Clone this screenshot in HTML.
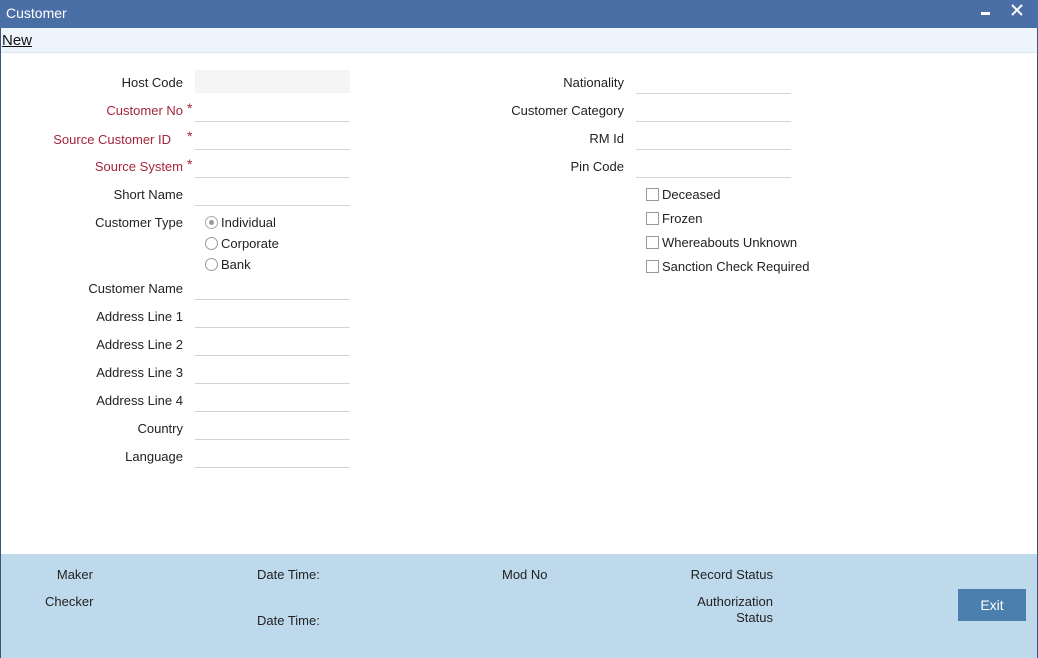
<!DOCTYPE html>
<html><head><meta charset="utf-8"><style>
*{margin:0;padding:0;box-sizing:border-box}
body{width:1038px;height:658px;overflow:hidden;background:#fff;font-family:"Liberation Sans",Arial,sans-serif;font-size:13px;color:#222;position:relative}
.a{position:absolute;white-space:nowrap}
.l{position:absolute;text-align:right;white-space:nowrap;line-height:16px}
.r{color:#a3263a}
.f{position:absolute;height:1px;background:#d4d4d4}
.n{font-family:"Liberation Sans Narrow","Liberation Sans",sans-serif;font-size:13px;color:#222;position:absolute;white-space:nowrap;line-height:16px}
.rad{position:absolute;width:13px;height:13px;border:1px solid #9a9a9a;border-radius:50%;background:#fff}
.cb{position:absolute;width:13px;height:13px;border:1px solid #9a9a9a;background:#fff}
</style></head><body>
<div class="a" style="left:0;top:0;width:1038px;height:28px;background:#4a6fa6"></div>
<div class="a" style="left:6px;top:5px;color:#fff;font-size:14px">Customer</div>
<div class="a" style="left:981px;top:12px;width:9px;height:3px;background:#fff"></div>
<svg class="a" style="left:1011px;top:4px" width="12" height="12" viewBox="0 0 12 12"><path d="M1 1L11 11M11 1L1 11" stroke="#fff" stroke-width="2"/></svg>
<div class="a" style="left:0;top:28px;width:1038px;height:25px;background:#eef4fc;border-bottom:1px solid #dde5ee"></div>
<div class="a" style="left:2px;top:32px;font-size:15px;text-decoration:underline;color:#111">New</div>
<div class="a" style="left:0;top:28px;width:1px;height:630px;background:#3a5578"></div>
<div class="a" style="left:1037px;top:28px;width:1px;height:630px;background:#3a5578"></div>

<div class="a" style="left:195px;top:70px;width:155px;height:23px;background:#f5f5f5"></div>
<div class="l" style="right:855px;top:75px">Host Code</div>
<div class="l r" style="right:855px;top:103px">Customer No</div><div class="a r" style="left:187px;top:100px;font-size:14px">*</div>
<div class="l r" style="right:867px;top:132px">Source Customer ID</div><div class="a r" style="left:187px;top:128px;font-size:14px">*</div>
<div class="l r" style="right:855px;top:159px">Source System</div><div class="a r" style="left:187px;top:156px;font-size:14px">*</div>
<div class="l" style="right:855px;top:187px">Short Name</div>
<div class="l" style="right:855px;top:215px">Customer Type</div>
<div class="f" style="left:195px;top:121px;width:155px"></div>
<div class="f" style="left:195px;top:149px;width:155px"></div>
<div class="f" style="left:195px;top:177px;width:155px"></div>
<div class="f" style="left:195px;top:205px;width:155px"></div>
<div class="rad" style="left:205px;top:216px;border-color:#aaa"></div><div class="a" style="left:209px;top:220px;width:5px;height:5px;border-radius:50%;background:#999"></div>
<div class="a" style="left:221px;top:215px">Individual</div>
<div class="rad" style="left:205px;top:237px"></div><div class="a" style="left:221px;top:236px">Corporate</div>
<div class="rad" style="left:205px;top:258px"></div><div class="a" style="left:221px;top:257px">Bank</div>

<div class="l" style="right:855px;top:281px">Customer Name</div>
<div class="l" style="right:855px;top:309px">Address Line 1</div>
<div class="l" style="right:855px;top:337px">Address Line 2</div>
<div class="l" style="right:855px;top:365px">Address Line 3</div>
<div class="l" style="right:855px;top:393px">Address Line 4</div>
<div class="l" style="right:855px;top:421px">Country</div>
<div class="l" style="right:855px;top:449px">Language</div>
<div class="f" style="left:195px;top:299px;width:155px"></div>
<div class="f" style="left:195px;top:327px;width:155px"></div>
<div class="f" style="left:195px;top:355px;width:155px"></div>
<div class="f" style="left:195px;top:383px;width:155px"></div>
<div class="f" style="left:195px;top:411px;width:155px"></div>
<div class="f" style="left:195px;top:439px;width:155px"></div>
<div class="f" style="left:195px;top:467px;width:155px"></div>

<div class="l" style="right:414px;top:75px">Nationality</div>
<div class="l" style="right:414px;top:103px">Customer Category</div>
<div class="l" style="right:414px;top:131px">RM Id</div>
<div class="l" style="right:414px;top:159px">Pin Code</div>
<div class="f" style="left:636px;top:93px;width:155px"></div>
<div class="f" style="left:636px;top:121px;width:155px"></div>
<div class="f" style="left:636px;top:149px;width:155px"></div>
<div class="f" style="left:636px;top:177px;width:155px"></div>
<div class="cb" style="left:646px;top:188px"></div><div class="a" style="left:662px;top:187px">Deceased</div>
<div class="cb" style="left:646px;top:212px"></div><div class="a" style="left:662px;top:211px">Frozen</div>
<div class="cb" style="left:646px;top:236px"></div><div class="a" style="left:662px;top:235px">Whereabouts Unknown</div>
<div class="cb" style="left:646px;top:260px"></div><div class="a" style="left:662px;top:259px">Sanction Check Required</div>

<div class="a" style="left:1px;top:554px;width:1036px;height:104px;background:#bfd9ec"></div>
<div class="n" style="right:945px;top:567px">Maker</div>
<div class="n" style="left:45px;top:594px">Checker</div>
<div class="n" style="left:257px;top:567px">Date Time:</div>
<div class="n" style="left:257px;top:613px">Date Time:</div>
<div class="n" style="left:502px;top:567px">Mod No</div>
<div class="n" style="right:265px;top:567px">Record Status</div>
<div class="n" style="right:265px;top:594px;text-align:right">Authorization<br>Status</div>
<div class="a" style="left:958px;top:589px;width:68px;height:32px;background:#4b7fae;color:#fff;font-family:'Liberation Sans Narrow','Liberation Sans',sans-serif;font-size:14px;text-align:center;line-height:32px">Exit</div>
</body></html>
